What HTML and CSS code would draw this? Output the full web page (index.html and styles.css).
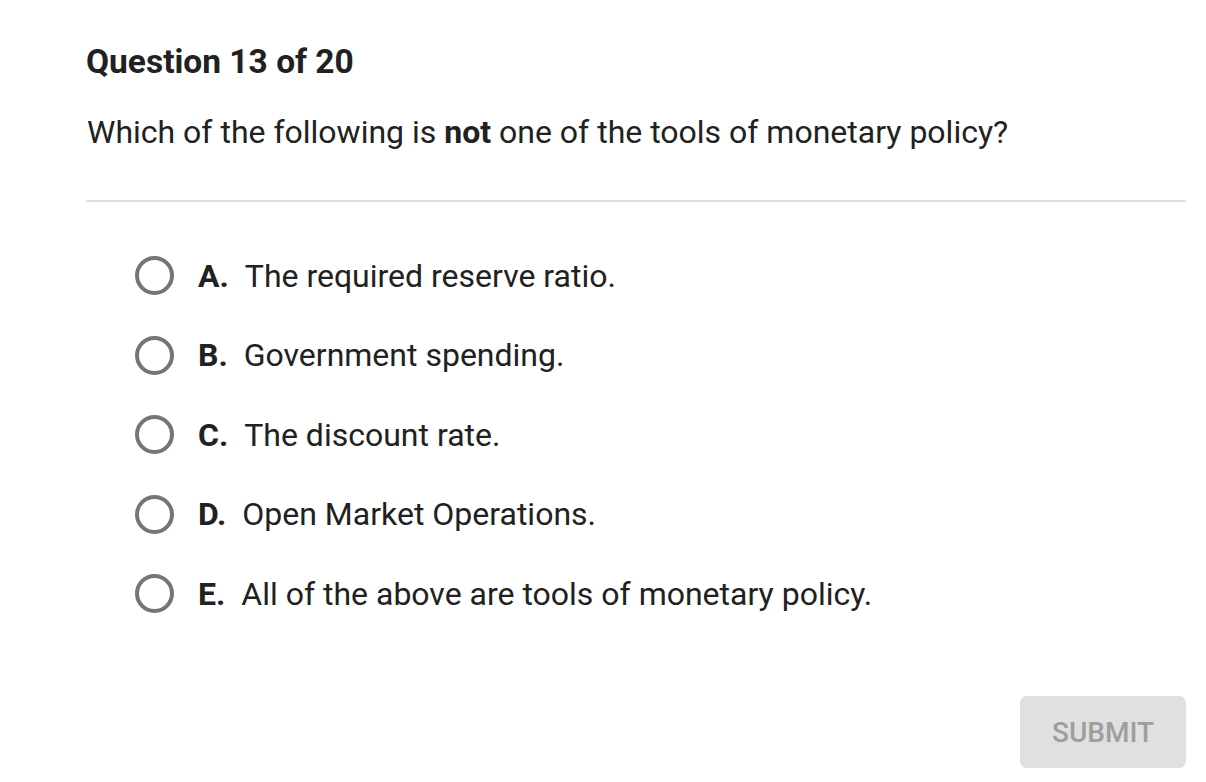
FILE: index.html
```html
<!DOCTYPE html>
<html>
<head>
<meta charset="utf-8">
<link rel="stylesheet" href="styles.css">
</head>
<body>
<div class="page">
  <h1 class="title">Question 13 of 20</h1>
  <p class="prompt">Which of the following is <b>not</b> one of the tools of monetary policy?</p>
  <hr class="divider">
  <ul class="options">
    <li class="option"><span class="radio"></span><span class="letter">A.</span><span class="text">The required reserve ratio.</span></li>
    <li class="option"><span class="radio"></span><span class="letter">B.</span><span class="text">Government spending.</span></li>
    <li class="option"><span class="radio"></span><span class="letter">C.</span><span class="text">The discount rate.</span></li>
    <li class="option"><span class="radio"></span><span class="letter">D.</span><span class="text">Open Market Operations.</span></li>
    <li class="option"><span class="radio"></span><span class="letter">E.</span><span class="text">All of the above are tools of monetary policy.</span></li>
  </ul>
  <div class="actions"><button class="submit">SUBMIT</button></div>
</div>
</body>
</html>
```
FILE: styles.css
```css
html, body {
  margin: 0;
  padding: 0;
  background: #ffffff;
}
body {
  font-family: Roboto, "Liberation Sans", sans-serif;
  color: #212121;
}
.page {
  padding: 40px 20px 14px 86px;
}
.title {
  margin: 0;
  font-size: 33.5px;
  font-weight: 700;
  line-height: 44px;
  color: #212121;
}
.prompt {
  margin: 26px 0 0 1px;
  font-size: 32px;
  line-height: 44px;
  font-weight: 400;
}
.prompt b {
  font-weight: 700;
}
.divider {
  margin: 46px 0 0 0;
  border: none;
  height: 2px;
  background: #e0e0e0;
}
.options {
  list-style: none;
  margin: 52px 0 0 0;
  padding: 0 0 0 49px;
  display: flex;
  flex-direction: column;
  gap: 36.5px;
}
.option {
  display: flex;
  align-items: center;
  height: 43px;
  font-size: 32px;
}
.radio {
  width: 31px;
  height: 31px;
  border: 4px solid #757575;
  border-radius: 50%;
  flex: none;
}
.letter {
  font-weight: 700;
  margin-left: 24px;
  margin-right: 16px;
}
.text {
  font-weight: 400;
}
.actions {
  display: flex;
  justify-content: flex-end;
  margin-top: 81px;
}
.submit {
  width: 166px;
  height: 72px;
  border: none;
  border-radius: 7px;
  background: #e0e0e0;
  color: #9e9e9e;
  font-family: Roboto, "Liberation Sans", sans-serif;
  font-size: 28px;
  font-weight: 500;
  padding: 0;
}
```
